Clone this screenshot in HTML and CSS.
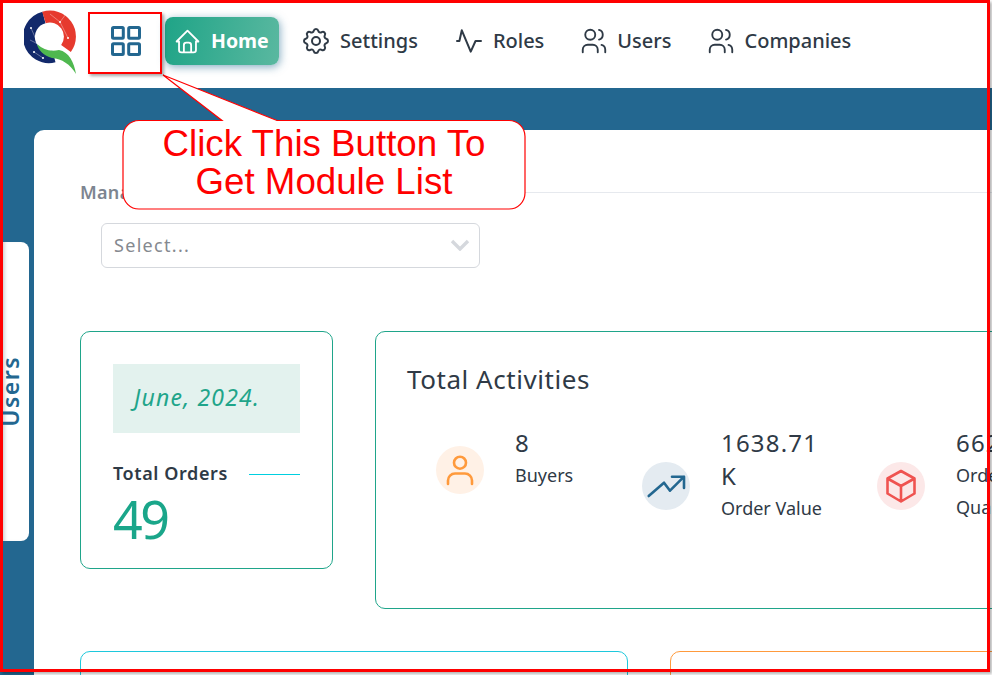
FILE: index.html
```html
<!DOCTYPE html>
<html lang="en">
<head>
  <meta charset="UTF-8">
  <meta name="viewport" content="width=device-width, initial-scale=1.0">
  <title>Dashboard</title>
  <link rel="stylesheet" href="styles.css">
</head>
<body>
  <header class="topbar">
    <svg class="logo" width="54" height="66" viewBox="24 10 54 66" fill="none">
      <path d="M44 17.5A20 20 0 0 0 54 56.5" stroke="#12296b" stroke-width="12"/>
      <path d="M44 17.5A20 20 0 0 1 66 48.5" stroke="#e63a2e" stroke-width="12"/>
      <path d="M37 44C44 50 50 52 59 50C69 52 74 62 76 74C70 64 62 59 52 58C44 56 38 50 37 44Z" fill="#4fb84f"/>
      <path d="M31 28L38 44L30 40M34 52L43 58M50 14L60 22L66 14M60 22L68 38" stroke="#fff" stroke-width=".5" opacity=".7"/>
      <circle cx="31" cy="28" r="1" fill="#fff"/>
      <circle cx="34" cy="52" r="1" fill="#fff"/>
      <circle cx="43" cy="58" r="1" fill="#fff"/>
      <circle cx="60" cy="22" r="1" fill="#fff"/>
      <circle cx="68" cy="38" r="1" fill="#fff"/>
    </svg>
    <div class="module-btn">
      <svg width="32" height="32" viewBox="0 0 32 32" fill="none" stroke="#236790" stroke-width="3">
        <rect x="2.500" y="2.500" width="10.800" height="10.800" rx="1"/>
        <rect x="18.700" y="2.500" width="10.800" height="10.800" rx="1"/>
        <rect x="2.500" y="18.700" width="10.800" height="10.800" rx="1"/>
        <rect x="18.700" y="18.700" width="10.800" height="10.800" rx="1"/>
      </svg>
    </div>
    <nav class="nav">
      <a class="nav-item nav-home">
        <svg class="icon" viewBox="0 0 24 24"><path d="M5 12H3l9-9 9 9h-2M5 12v7a2 2 0 0 0 2 2h10a2 2 0 0 0 2-2v-7M9 21v-6a2 2 0 0 1 2-2h2a2 2 0 0 1 2 2v6"/></svg>
        Home
      </a>
      <a class="nav-item nav-settings">
        <svg class="icon" viewBox="0 0 24 24"><path d="M10.325 4.317c.426-1.756 2.924-1.756 3.35 0a1.724 1.724 0 0 0 2.573 1.066c1.543-.94 3.31.826 2.37 2.37a1.724 1.724 0 0 0 1.065 2.572c1.756.426 1.756 2.924 0 3.35a1.724 1.724 0 0 0-1.066 2.573c.94 1.543-.826 3.31-2.37 2.37a1.724 1.724 0 0 0-2.572 1.065c-.426 1.756-2.924 1.756-3.35 0a1.724 1.724 0 0 0-2.573-1.066c-1.543.94-3.31-.826-2.37-2.37a1.724 1.724 0 0 0-1.065-2.572c-1.756-.426-1.756-2.924 0-3.35a1.724 1.724 0 0 0 1.066-2.573c-.94-1.543.826-3.31 2.37-2.37c1 .608 2.296.07 2.572-1.065z"/><circle cx="12" cy="12" r="3"/></svg>
        Settings
      </a>
      <a class="nav-item nav-roles">
        <svg class="icon" viewBox="0 0 24 24"><path d="M3 12h1.800L6.600 4l6.700 16 3.600-8H21"/></svg>
        Roles
      </a>
      <a class="nav-item nav-users">
        <svg class="icon icon-people" viewBox="0 0 24 24"><circle cx="9" cy="7" r="4"/><path d="M3 21v-2a4 4 0 0 1 4-4h4a4 4 0 0 1 4 4v2M16 3.130a4 4 0 0 1 0 7.750M21 21v-2a4 4 0 0 0-3-3.850"/></svg>
        Users
      </a>
      <a class="nav-item">
        <svg class="icon icon-people" viewBox="0 0 24 24"><circle cx="9" cy="7" r="4"/><path d="M3 21v-2a4 4 0 0 1 4-4h4a4 4 0 0 1 4 4v2M16 3.130a4 4 0 0 1 0 7.750M21 21v-2a4 4 0 0 0-3-3.850"/></svg>
        Companies
      </a>
    </nav>
  </header>

  <main class="content">
    <div class="panel">
      <div class="filter-head">
        <span class="filter-label">Manager</span>
        <span class="filter-line"></span>
      </div>
      <div class="select">
        <span>Select...</span>
        <svg width="20" height="12" viewBox="0 0 20 12" fill="none" stroke="#d5d8dd" stroke-width="3.400"><path d="M2 2l8 8 8-8"/></svg>
      </div>

      <div class="card-row">
        <section class="card card-orders">
          <div class="date-box">June, 2024.</div>
          <div class="orders-head">
            <span>Total Orders</span>
            <span class="orders-line"></span>
          </div>
          <div class="orders-count">49</div>
        </section>

        <section class="card card-activities">
          <h2>Total Activities</h2>
          <div class="stats">
            <div class="stat stat-buyers">
              <span class="stat-icon icon-orange">
                <svg class="stat-svg" viewBox="0 0 48 48"><circle cx="24" cy="16.700" r="6"/><path d="M12 38v-3.500a7 7 0 0 1 7-7h10a7 7 0 0 1 7 7V38"/></svg>
              </span>
              <div class="stat-text">
                <div class="stat-value">8</div>
                <div class="stat-label">Buyers</div>
              </div>
            </div>
            <div class="stat stat-value-col">
              <span class="stat-icon icon-blue">
                <svg class="stat-svg" viewBox="0 0 48 48"><path d="M6.700 34L22 20.700l6 8L42 14.700M30 14.700h12V26"/></svg>
              </span>
              <div class="stat-text">
                <div class="stat-value">1638.71 K</div>
                <div class="stat-label">Order Value</div>
              </div>
            </div>
            <div class="stat">
              <span class="stat-icon icon-red">
                <svg class="stat-svg" viewBox="0 0 48 48"><path d="M24 9l13.500 7.500v15L24 39.500l-13.500-8v-15ZM24 24l13.500-7.500M24 24v15.500M24 24l-13.500-7.500"/></svg>
              </span>
              <div class="stat-text">
                <div class="stat-value">662</div>
                <div class="stat-label">Order Quantity</div>
              </div>
            </div>
          </div>
        </section>
      </div>

      <div class="card-row bottom-row">
        <section class="card card-cyan"></section>
        <section class="card card-orange"></section>
      </div>
    </div>
  </main>

  <aside class="side-tab"><span>Users</span></aside>

  <!-- annotation drawn on the screenshot -->
  <div class="callout">
    <svg class="callout-shape" width="404" height="139" viewBox="122 73 404 139">
      <path d="M163 75L222 120.500H139a16 16 0 0 0-16 16V193a16 16 0 0 0 16 16H509a16 16 0 0 0 16-16V136.500a16 16 0 0 0-16-16H277Z" fill="#fff" stroke="#f00" stroke-width="1.200"/>
    </svg>
    <div class="callout-text">Click This Button To<br>Get Module List</div>
  </div>
  <div class="mark-box"></div>
  <div class="frame"></div>
</body>
</html>
```

FILE: styles.css
```css
* {
  box-sizing: border-box;
}
html, body {
  height: 675px;
  overflow: hidden;
}
body {
  margin: 0;
  position: relative;
  font-family: "Noto Sans", sans-serif;
  color: #2f3a46;
  background-color: #236790;
}
.topbar {
  display: flex;
  align-items: flex-start;
  height: 88px;
  padding: 10px 0 0 24px;
  background-color: #fff;
}
.logo {
  flex: none;
}
.module-btn {
  display: flex;
  justify-content: center;
  width: 72px;
  padding: 15px 0 0 2px;
  margin: 0 4px 0 11px;
}
.nav {
  display: flex;
  align-items: center;
  margin-top: 7px;
}
.nav-item {
  display: flex;
  align-items: center;
  gap: 8px;
  font-size: 20px;
  font-weight: 500;
  line-height: 26px;
  white-space: nowrap;
  margin-right: 33px;
}
.icon {
  flex: none;
  width: 32px;
  height: 32px;
  fill: none;
  stroke: currentColor;
  stroke-width: 1.500;
  stroke-linecap: round;
  stroke-linejoin: round;
}
.icon-people {
  width: 30px;
  height: 30px;
  margin-left: 2px;
}
.nav-home {
  gap: 9px;
  width: 114px;
  height: 48px;
  padding-left: 8px;
  margin-right: 21px;
  color: #fff;
  font-size: 19.500px;
  font-weight: 700;
  border-radius: 8px;
  background: linear-gradient(100deg, #1fa487, #5ab8a0);
  box-shadow: 1px 2px 8px rgba(35, 103, 144, 0.55);
}
.nav-home .icon {
  width: 29px;
  height: 29px;
}
.nav-settings {
  margin-right: 35px;
}
.content {
  padding: 42px 0 0 34px;
}
.panel {
  width: 1100px;
  height: 700px;
  padding: 50px 0 0 46px;
  background-color: #fff;
  border-radius: 10px 0 0 0;
}
.filter-head {
  display: flex;
  align-items: center;
  gap: 10px;
  height: 24px;
}
.filter-label {
  font-size: 18px;
  font-weight: 600;
  letter-spacing: 0.3px;
  color: #7d8590;
}
.filter-line {
  flex: 1;
  height: 1px;
  background-color: #e6e9ee;
}
.select {
  display: flex;
  align-items: center;
  justify-content: space-between;
  width: 379px;
  height: 45px;
  margin: 19px 0 0 21px;
  padding: 0 9px 2px 12px;
  font-size: 18px;
  letter-spacing: 1.300px;
  color: #85898f;
  border: 1px solid #d5d8dd;
  border-radius: 6px;
}
.card-row {
  display: flex;
  align-items: flex-start;
  gap: 42px;
  margin-top: 63px;
}
.card {
  flex: none;
  border: 1px solid #1fa58a;
  border-radius: 10px;
}
.card-orders {
  width: 253px;
  height: 238px;
  padding: 32px;
}
.date-box {
  height: 69px;
  padding-left: 21px;
  line-height: 67px;
  font-size: 23px;
  font-style: italic;
  letter-spacing: 1.200px;
  color: #1fa58a;
  background-color: #e3f2ee;
}
.orders-head {
  display: flex;
  align-items: flex-start;
  justify-content: space-between;
  margin-top: 27px;
  font-size: 18px;
  font-weight: 600;
  letter-spacing: 0.600px;
  line-height: 26px;
}
.orders-line {
  width: 51px;
  height: 1px;
  margin-top: 14px;
  background-color: #00cfe0;
}
.orders-count {
  font-size: 52px;
  letter-spacing: -2.500px;
  line-height: 66px;
  color: #1aa68a;
}
.card-activities {
  width: 700px;
  height: 278px;
  padding: 31px 0 0 31px;
}
.card-activities h2 {
  margin: 0;
  font-size: 26px;
  font-weight: 400;
  letter-spacing: 0.550px;
  line-height: 32px;
}
.stats {
  display: flex;
  align-items: flex-start;
  margin: 31px 0 0 29px;
}
.stat {
  display: flex;
  align-items: center;
  gap: 31px;
  flex: none;
}
.stat-buyers {
  width: 206px;
}
.stat-value-col {
  width: 235px;
}
.stat-icon {
  flex: none;
  width: 48px;
  height: 48px;
  border-radius: 50%;
}
.icon-orange {
  color: #ff9a3c;
  background-color: #fff1e6;
}
.icon-blue {
  color: #236790;
  background-color: #e4ebf1;
}
.icon-red {
  color: #ef5350;
  background-color: #fce8e8;
}
.stat-svg {
  display: block;
  width: 48px;
  height: 48px;
  fill: none;
  stroke: currentColor;
  stroke-width: 2.600;
  stroke-linecap: round;
  stroke-linejoin: round;
}
.stat-text {
  width: 112px;
  padding-bottom: 22px;
}
.stat-value {
  font-size: 24px;
  letter-spacing: 1.200px;
  line-height: 33px;
}
.stat-label {
  font-size: 18px;
  line-height: 32px;
}
.bottom-row {
  margin-top: 42px;
}
.card-cyan {
  width: 548px;
  height: 300px;
  border-color: #1ec8dc;
}
.card-orange {
  width: 548px;
  height: 300px;
  border-color: #ff9a3c;
}
.side-tab {
  position: absolute;
  left: 0;
  top: 242px;
  display: flex;
  align-items: center;
  justify-content: center;
  width: 29px;
  height: 299px;
  padding-right: 8px;
  background-color: #fff;
  border-radius: 0 8px 8px 0;
  box-shadow: inset 7px 0 4px -3px rgba(0, 0, 0, 0.25);
}
.side-tab span {
  writing-mode: vertical-rl;
  transform: rotate(180deg);
  font-size: 23px;
  font-weight: 600;
  letter-spacing: 1.500px;
  line-height: 21px;
  color: #236790;
}
.callout {
  position: absolute;
  left: 122px;
  top: 73px;
  width: 404px;
  height: 139px;
}
.callout-shape {
  display: block;
}
.callout-text {
  position: absolute;
  left: 0;
  right: 0;
  top: 52px;
  text-align: center;
  font-family: "Liberation Sans", Arial, sans-serif;
  font-size: 36.700px;
  line-height: 38px;
  color: #f00;
}
.mark-box {
  position: absolute;
  left: 88px;
  top: 12px;
  width: 74px;
  height: 62px;
  border: 2px solid #f00;
  box-shadow: 2px 2px 3px rgba(0, 0, 0, 0.35);
}
.frame {
  position: absolute;
  left: 0;
  top: 0;
  width: 990px;
  height: 672px;
  border: 3px solid #f00;
  box-shadow: 2px 2px 3px rgba(0, 0, 0, 0.3);
  pointer-events: none;
}
```
